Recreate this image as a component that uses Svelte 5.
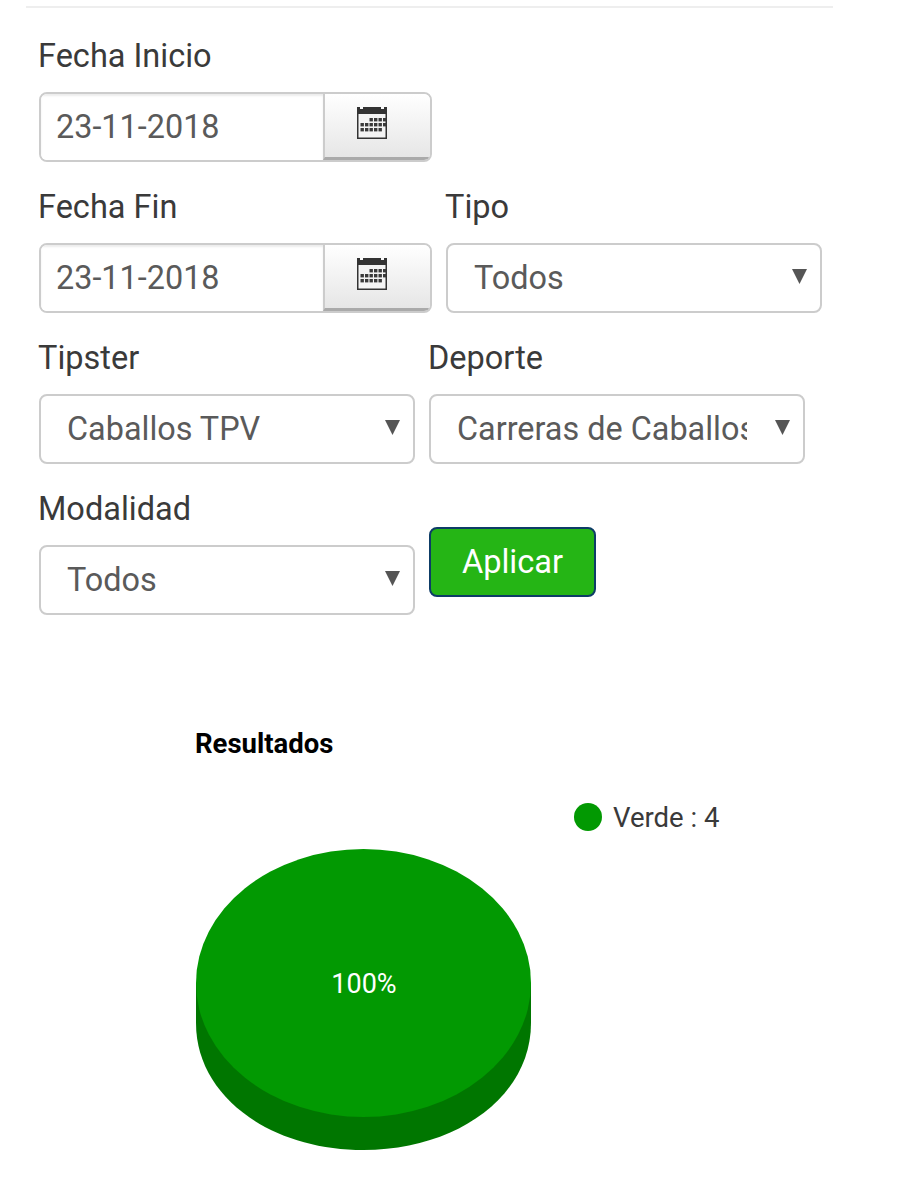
<script lang="ts">
	let inicio = $state('23-11-2018');
	let fin = $state('23-11-2018');
	let tipo = $state('Todos');
	let tipster = $state('Caballos TPV');
	let deporte = $state('Carreras de Caballos');
	let modalidad = $state('Todos');

	// dots of the calendar glyph, as [x, y]
	const dots = [
		[13.5, 11], [18, 11], [22.5, 11], [27, 11],
		[4.5, 16], [9, 16], [13.5, 16], [18, 16], [22.5, 16], [27, 16],
		[4.5, 21], [9, 21], [13.5, 21], [18, 21], [22.5, 21]
	];
</script>

{#snippet calendar()}
	<svg class="cal" width="32" height="33" viewBox="0 0 32 33" aria-hidden="true">
		<path d="M1 1h3v2h3V1h18v2h3V1h3v32H1z" fill="#333" />
		<rect x="2.5" y="8" width="27" height="23.5" fill="#f4f4f4" />
		{#each dots as d}
			<rect x={d[0]} y={d[1] + 1} width="3.4" height="3.4" fill="#3a3a3a" />
		{/each}
	</svg>
{/snippet}

{#snippet dateField(label, id, get, set)}
	<div class="field date">
		<label for={id}>{label}</label>
		<div class="input-group">
			<input {id} type="text" value={get()} oninput={(e) => set(e.currentTarget.value)} />
			<button type="button" class="addon" aria-label="Abrir calendario">{@render calendar()}</button>
		</div>
	</div>
{/snippet}

{#snippet selectField(label, id, get, set, options)}
	<div class="field">
		<label for={id}>{label}</label>
		<div class="select-wrap">
			<select {id} value={get()} onchange={(e) => set(e.currentTarget.value)}>
				{#each options as o}
					<option>{o}</option>
				{/each}
			</select>
			<svg class="arrow" width="15" height="15" viewBox="0 0 14 14" aria-hidden="true">
				<path d="M0 0h14L7 14z" fill="#555" />
			</svg>
		</div>
	</div>
{/snippet}

<div class="page">
	<hr />
	<form class="filters" onsubmit={(e) => e.preventDefault()}>
		<div class="row">
			{@render dateField('Fecha Inicio', 'inicio', () => inicio, (v) => (inicio = v))}
		</div>
		<div class="row">
			{@render dateField('Fecha Fin', 'fin', () => fin, (v) => (fin = v))}
			{@render selectField('Tipo', 'tipo', () => tipo, (v) => (tipo = v), ['Todos', 'Verde', 'Rojo'])}
		</div>
		<div class="row">
			{@render selectField('Tipster', 'tipster', () => tipster, (v) => (tipster = v), ['Caballos TPV'])}
			{@render selectField('Deporte', 'deporte', () => deporte, (v) => (deporte = v), ['Carreras de Caballos'])}
		</div>
		<div class="row">
			{@render selectField('Modalidad', 'modalidad', () => modalidad, (v) => (modalidad = v), ['Todos'])}
			<button type="submit" class="apply">Aplicar</button>
		</div>
	</form>

	<svg class="chart" width="904" height="470" viewBox="0 0 904 470">
		<text x="195" y="42" class="title">Resultados</text>
		<circle cx="588" cy="106" r="14" fill="#029902" />
		<text x="613" y="116" class="legend">Verde : 4</text>
		<path d="M196 272v40c0 74 75 127 167.5 127S531 386 531 312v-40z" fill="#007600" />
		<ellipse cx="363.5" cy="272" rx="167.5" ry="134" fill="#029902" />
		<text x="364" y="282" class="pct" text-anchor="middle">100%</text>
	</svg>
</div>

<style>
	:global(body) {
		margin: 0;
		background: #fff;
	}

	.page {
		width: 904px;
		font-family: Roboto, 'Liberation Sans', sans-serif;
		padding-top: 6px;
	}

	hr {
		width: 807px;
		height: 2px;
		margin: 0 0 0 26px;
		border: none;
		background: #eee;
	}

	.filters {
		padding: 26px 0 0 39px;
		display: flex;
		flex-direction: column;
		gap: 21px;
	}

	.row {
		display: flex;
		gap: 14px;
		height: 130px;
	}

	.field {
		width: 376px;
	}
	.field.date {
		width: 393px;
	}

	label {
		display: block;
		height: 58px;
		font-size: 32.5px;
		line-height: 44px;
		color: #3a3a3a;
		margin-left: -1px;
	}

	.input-group {
		display: flex;
		height: 70px;
		box-sizing: border-box;
		border: 2px solid #ccc;
		border-radius: 8px;
		overflow: hidden;
	}

	input {
		flex: 1;
		min-width: 0;
		border: none;
		outline: none;
		padding: 0 15px;
		font: 32.4px Roboto, sans-serif;
		color: #5a5a5a;
		box-shadow: inset 0 2px 2px rgba(0, 0, 0, 0.08);
	}

	.addon {
		width: 107px;
		padding: 0;
		border: none;
		border-left: 2px solid #ccc;
		border-bottom: 3px solid #aaa;
		background: linear-gradient(#fff, #e6e6e6);
		display: flex;
		align-items: center;
		justify-content: center;
	}
	.cal {
		display: block;
		margin: -6px 11px 0 0;
	}

	.select-wrap {
		position: relative;
		height: 70px;
	}

	select {
		appearance: none;
		width: 100%;
		height: 70px;
		box-sizing: border-box;
		border: 2px solid #ccc;
		border-radius: 8px;
		background: #fff;
		padding: 0 56px 0 26px;
		font: 32.4px Roboto, sans-serif;
		color: #5a5a5a;
		outline: none;
	}

	.arrow {
		position: absolute;
		right: 15px;
		top: 26px;
		pointer-events: none;
	}

	.apply {
		align-self: flex-start;
		width: 167px;
		height: 70px;
		margin-top: 40px;
		box-sizing: border-box;
		border: 2px solid #0d3c66;
		border-radius: 8px;
		background: #25b515;
		color: #fff;
		font: 32.6px Roboto, sans-serif;
		padding: 0;
	}

	.chart {
		display: block;
		margin-top: 94px;
	}
	.title {
		font: 700 27.5px Roboto, sans-serif;
		fill: #000;
	}
	.legend {
		font: 27.5px Roboto, sans-serif;
		fill: #3a3a3a;
	}
	.pct {
		font: 27px Roboto, sans-serif;
		fill: #fff;
	}
</style>
